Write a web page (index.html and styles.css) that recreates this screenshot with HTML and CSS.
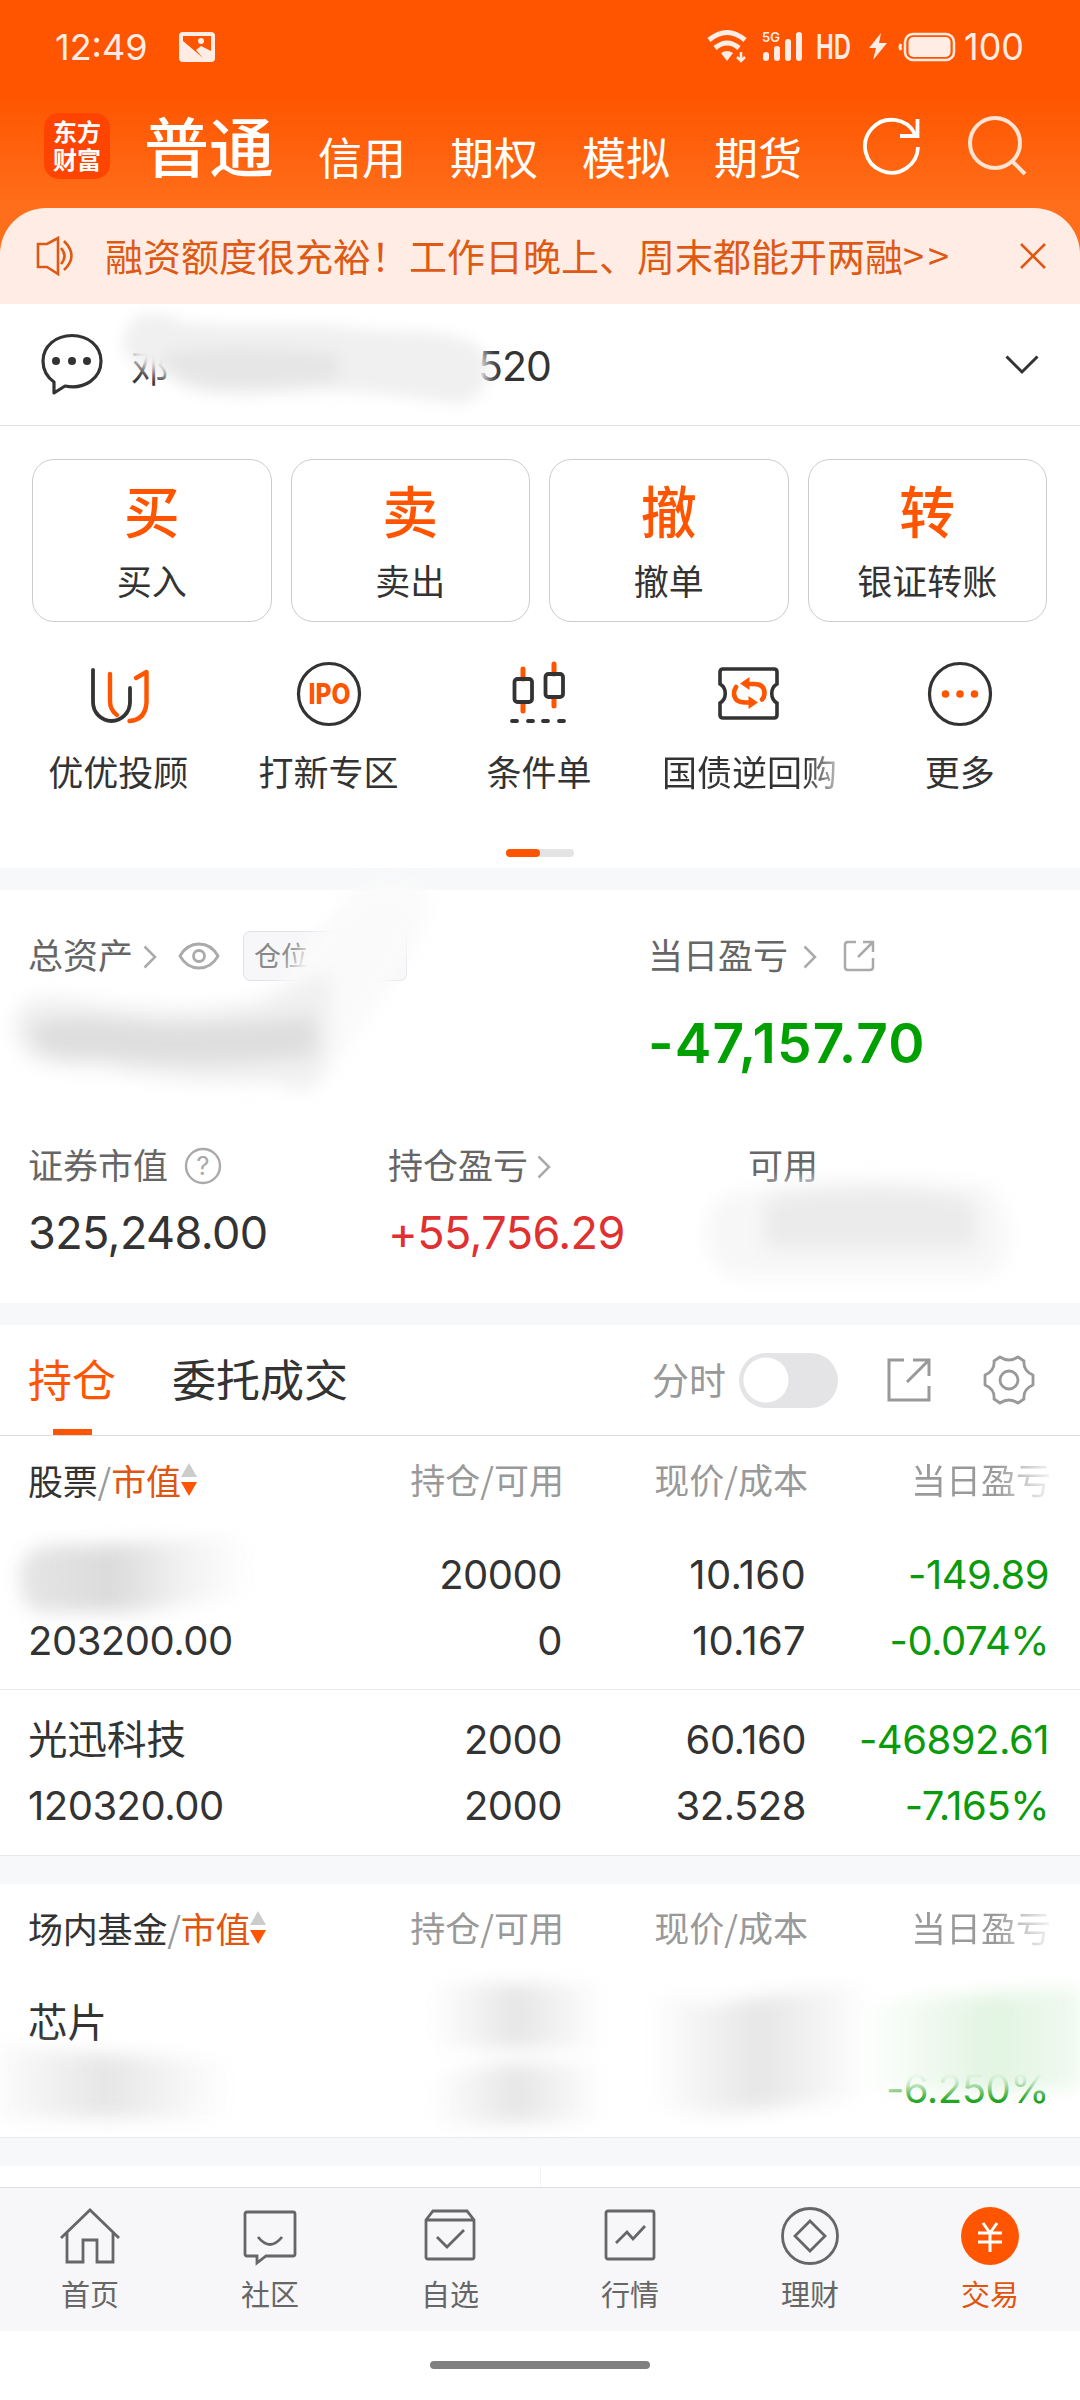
FILE: index.html
```html
<!DOCTYPE html>
<html lang="zh-CN">
<head>
  <meta charset="utf-8">
  <title>交易</title>
  <link rel="stylesheet" href="styles.css">
</head>
<body>
  <div class="header">
    <div class="status-bar">
      <span class="clock">12:49</span>
      <svg class="photo-icon" width="36" height="30" viewBox="0 0 36 30">
        <rect x="0" y="0" width="36" height="30" rx="4" fill="#ffede5"/>
        <path d="M4 4H32V19L22 14L17 18L24 26L4 9Z" fill="#ff5500"/>
        <circle cx="22" cy="9" r="3" fill="#ffede5"/>
      </svg>
      <div class="status-right">
        <svg width="330" height="60" viewBox="0 -11 330 60" fill="none" stroke="#ffede5">
          <path d="M3 12Q21 -3 39 12" stroke-width="5"/>
          <path d="M9 20Q21 10 33 20" stroke-width="5"/>
          <path d="M15 25Q21 21 27 25L21 33Z" fill="#ffede5" stroke="none"/>
          <path d="M35 24V31M31 29L35 33L39 29" stroke-width="2.5"/>
          <path d="M60 27V30M71 21V30M82 14V30M93 7V30" stroke-width="6" stroke-linecap="round"/>
          <path d="M175 5L163 20H170L167 32L181 15H173Z" fill="#ffede5" stroke="none"/>
          <rect x="199" y="6" width="49" height="26" rx="8" stroke-width="2.5"/>
          <rect x="202.500" y="9" width="42" height="20" rx="5" fill="#ffede5" stroke="none"/>
          <path d="M195 16Q193 19 195 22" stroke-width="3"/>
          <text class="net-text" x="56" y="14">5G</text>
          <text class="hd-text" x="110" y="31" textLength="35" lengthAdjust="spacingAndGlyphs">HD</text>
          <text class="battery-text" x="258" y="32" textLength="60" lengthAdjust="spacingAndGlyphs">100</text>
        </svg>
      </div>
    </div>
    <div class="top-nav">
      <div class="logo"><span>东方</span><span>财富</span></div>
      <span class="top-tab active">普通</span>
      <span class="top-tab">信用</span>
      <span class="top-tab">期权</span>
      <span class="top-tab">模拟</span>
      <span class="top-tab">期货</span>
      <svg class="refresh" width="60" height="60" viewBox="0 0 60 60" fill="none" stroke="#fff" stroke-width="3.800">
        <path d="M56 31A26.500 26.500 0 1 1 53 18"/>
        <path d="M55.500 3V20H38"/>
      </svg>
      <svg class="search" width="62" height="62" viewBox="0 0 62 62" fill="none" stroke="#ffe3d3" stroke-width="4">
        <circle cx="29" cy="29" r="25"/>
        <path d="M46 47L59 60"/>
      </svg>
    </div>
  </div>

  <div class="notice">
    <svg width="40" height="40" viewBox="0 0 40 40" fill="none" stroke="#de5a14" stroke-width="2.600">
      <path d="M2 8H11L22 2V38L11 31H2Z"/>
      <path d="M25 12Q32 20 25 28M28 5Q43 20 28 34"/>
    </svg>
    <span class="notice-text">融资额度很充裕！工作日晚上、周末都能开两融<span class="more">&gt;&gt;</span></span>
    <svg class="close" width="26" height="26" viewBox="0 0 26 26" fill="none" stroke="#de5a14" stroke-width="2.600">
      <path d="M1 1L25 25M25 1L1 25"/>
    </svg>
  </div>

  <div class="account">
    <svg width="62" height="64" viewBox="0 0 62 64" fill="none" stroke="#333" stroke-width="3.200">
      <path d="M13 49V60L24 53C44 57 60 45 60 28C60 13 47 2.500 31 2.500S2 13 2 28C2 37 6 44 13 49Z" stroke-linejoin="round"/>
      <g fill="#333" stroke="none"><circle cx="15" cy="28" r="4"/><circle cx="31" cy="28" r="4"/><circle cx="46" cy="28" r="4"/></g>
    </svg>
    <span class="account-name">邓</span>
    <span class="account-no">520</span>
    <svg class="chevron-down" width="34" height="20" viewBox="0 0 34 20" fill="none" stroke="#333" stroke-width="3">
      <path d="M1.500 1.500L17 17L32.500 1.500"/>
    </svg>
    <svg class="smudge account-smudge" width="420" height="120" viewBox="0 0 420 120">
      <path d="M16 40C14 8 36 -2 58 6C90 20 150 14 220 16C300 24 350 18 372 38C388 54 384 88 350 94C320 90 260 78 200 82C150 86 90 90 66 72C52 58 28 66 16 40Z" fill="#f1f0f0"/>
      <path d="M50 46C90 34 170 38 230 44V70C170 76 100 82 72 66Z" fill="#e6e6e6"/>
    </svg>
  </div>

  <div class="actions">
    <div class="action-card"><b>买</b><span>买入</span></div>
    <div class="action-card"><b>卖</b><span>卖出</span></div>
    <div class="action-card"><b>撤</b><span>撤单</span></div>
    <div class="action-card"><b>转</b><span>银证转账</span></div>
  </div>

  <div class="shortcuts">
    <div class="shortcut">
      <svg width="66" height="66" viewBox="0 0 66 66" fill="none" stroke-width="3.800" stroke-linecap="round" stroke-linejoin="round">
        <path d="M8 9V41A18 18.500 0 0 0 45 41V27" stroke="#333"/>
        <path d="M25 13V40Q25 49 32 54M51 17L61.500 11V42Q60 59 44.500 60" stroke="#ff5500" stroke-width="4.400"/>
      </svg>
      <span>优优投顾</span>
    </div>
    <div class="shortcut">
      <svg width="66" height="66" viewBox="0 0 66 66">
        <circle cx="33" cy="33" r="30.500" fill="none" stroke="#333" stroke-width="3.200"/>
        <text class="ipo-text" x="12.500" y="43" textLength="42" lengthAdjust="spacingAndGlyphs">IPO</text>
      </svg>
      <span>打新专区</span>
    </div>
    <div class="shortcut">
      <svg width="66" height="66" viewBox="0 0 66 66" fill="none" stroke-width="3.800" stroke-linecap="round">
        <path d="M17 8V18M17 43V50M48 3V13M48 38V45" stroke="#ff5500" stroke-width="5"/>
        <rect x="8.500" y="18" width="17.500" height="23" rx="3" stroke="#333"/>
        <rect x="39.500" y="13" width="17.500" height="23" rx="3" stroke="#333"/>
        <path d="M6 60H11M22 60H27M37 60H42M53 60H58" stroke="#333"/>
      </svg>
      <span>条件单</span>
    </div>
    <div class="shortcut">
      <svg width="66" height="66" viewBox="0 0 66 66" fill="none">
        <path d="M7 8H58Q61 8 61 11V23C54 27 54 38 61 42V54Q61 57 58 57H7Q4 57 4 54V42C11 38 11 27 4 23V11Q4 8 7 8Z" stroke="#333" stroke-width="3.600"/>
        <path d="M33 23H38Q48.500 23 48.500 32Q48.500 36 46 38.500M20 26Q18 29 18 33Q19 41.500 29 41.500H34" stroke="#ff5500" stroke-width="4.600" stroke-linecap="round"/>
        <path d="M24 22.500L33.500 16V29ZM42 41.500L32.500 35V48Z" fill="#ff5500"/>
      </svg>
      <span class="fade-tail">国债逆回购</span>
    </div>
    <div class="shortcut">
      <svg width="66" height="66" viewBox="0 0 66 66">
        <circle cx="33" cy="33" r="30.500" fill="none" stroke="#333" stroke-width="3.200"/>
        <g fill="#ff5500"><circle cx="18.500" cy="33" r="3.800"/><circle cx="33" cy="33" r="3.800"/><circle cx="47.500" cy="33" r="3.800"/></g>
      </svg>
      <span>更多</span>
    </div>
  </div>
  <div class="pager"><i></i></div>

  <div class="assets">
    <div class="asset-top">
      <div class="asset-main">
        <div class="label"><span>总资产</span>
          <svg class="arrow" width="14" height="24" viewBox="0 0 14 24"><path d="M1.500 1.500L12 12L1.500 22.500"/></svg>
          <svg class="eye" width="42" height="28" viewBox="0 0 42 28" fill="none" stroke="#aaa" stroke-width="2.800">
            <path d="M2 14C11 -2 31 -2 40 14C31 30 11 30 2 14Z"/><circle cx="21" cy="14" r="5.500"/>
          </svg>
          <span class="tag">仓位</span>
        </div>
      </div>
      <div class="asset-day">
        <div class="label"><span>当日盈亏</span>
          <svg class="arrow" width="14" height="24" viewBox="0 0 14 24"><path d="M1.500 1.500L12 12L1.500 22.500"/></svg>
          <svg class="share-small" width="32" height="32" viewBox="0 0 32 32" fill="none" stroke="#aaa" stroke-width="2.500">
            <path d="M13 2H5Q2 2 2 5V27Q2 30 5 30H27Q30 30 30 27V18M20 2H30V12M30 2L15 17"/>
          </svg>
        </div>
        <div class="day-value num">-47,157.70</div>
      </div>
    </div>
    <div class="asset-grid">
      <div>
        <div class="label"><span>证券市值</span>
          <svg class="help" width="38" height="38" viewBox="0 0 38 38">
            <circle cx="19" cy="19" r="17" fill="none" stroke="#aaa" stroke-width="2.400"/>
            <text class="help-text" x="19" y="28" text-anchor="middle">?</text>
          </svg>
        </div>
        <div class="value num">325,248.00</div>
      </div>
      <div>
        <div class="label"><span>持仓盈亏</span>
          <svg class="arrow close-arrow" width="14" height="24" viewBox="0 0 14 24"><path d="M1.500 1.500L12 12L1.500 22.500"/></svg>
        </div>
        <div class="value num red">+55,756.29</div>
      </div>
      <div>
        <div class="label"><span>可用</span></div>
      </div>
    </div>
    <svg class="smudge asset-smudge" width="1080" height="430" viewBox="0 0 1080 430">
      <path d="M360 4C390 -14 432 -4 428 25C420 60 400 90 375 125L330 190C325 210 300 215 285 200L270 110C290 100 300 60 320 46Z" fill="#fafafa"/>
      <path d="M14 150C12 112 40 114 80 118C150 128 200 130 250 120C290 110 310 98 330 90V165C322 200 305 218 280 200C230 202 160 200 110 188C50 186 20 184 14 150Z" fill="#f0f0f0"/>
      <path d="M30 145C60 132 100 136 150 142C200 144 260 140 315 134V172C280 180 160 186 100 174C50 178 34 170 30 145Z" fill="#dedede"/>
      <path d="M715 320C770 294 900 290 990 305C1010 330 1020 370 990 395H730C705 380 700 350 715 320Z" fill="#f7f7f7"/>
      <path d="M765 318C820 304 920 302 975 320V366H765Z" fill="#ebebeb"/>
    </svg>
  </div>

  <div class="tabs">
    <span class="tab active">持仓</span>
    <span class="tab">委托成交</span>
    <span class="minute">分时</span>
    <span class="toggle"></span>
    <svg class="share" width="44" height="44" viewBox="0 0 44 44" fill="none" stroke="#999" stroke-width="3">
      <path d="M17 2H2V42H42V28M26 2H42V18M42 2L20 24"/>
    </svg>
    <svg class="gear" width="52" height="52" viewBox="0 0 52 52" fill="none" stroke="#999" stroke-width="2.800" stroke-linejoin="round">
      <path d="M17 3Q26 9 35 3L41 7Q40 17 50 21V31Q40 35 41 45L35 49Q26 43 17 49L11 45Q12 35 2 31V21Q12 17 11 7Z"/>
      <circle cx="26" cy="26" r="9"/>
    </svg>
  </div>

  <div class="table">
    <div class="thead">
      <span class="name"><em>股票</em>/<strong>市值</strong><svg width="16" height="34" viewBox="0 0 16 34"><path d="M8 0L16 14H0Z" fill="#ccc"/><path d="M0 19H16L8 33Z" fill="#ff5500"/></svg></span>
      <span>持仓/可用</span>
      <span>现价/成本</span>
      <span class="fade">当日盈亏</span>
    </div>
    <div class="trow num">
      <span><br>203200.00</span>
      <span>20000<br>0</span>
      <span class="wide">10.160<br>10.167</span>
      <span class="green">-149.89<br>-0.074%</span>
      <svg class="smudge row-smudge" width="300" height="120" viewBox="0 0 300 120">
        <path d="M20 50C18 26 36 18 70 19C110 20 160 14 250 10V68C200 74 160 86 120 86H45C26 86 20 74 20 50Z" fill="url(#fadeRight)"/>
        <defs><linearGradient id="fadeRight"><stop offset="0" stop-color="#e6e6e6"/><stop offset=".4" stop-color="#dbdbdb"/><stop offset=".7" stop-color="#f1f1f1"/><stop offset="1" stop-color="#fff"/></linearGradient></defs>
      </svg>
    </div>
    <div class="trow num second">
      <span><em class="stock">光迅科技</em><br>120320.00</span>
      <span>2000<br>2000</span>
      <span>60.160<br>32.528</span>
      <span class="green">-46892.61<br>-7.165%</span>
    </div>
  </div>
  <div class="gap"></div>

  <div class="table">
    <div class="thead">
      <span class="name"><em>场内基金</em>/<strong>市值</strong><svg width="16" height="34" viewBox="0 0 16 34"><path d="M8 0L16 14H0Z" fill="#ccc"/><path d="M0 19H16L8 33Z" fill="#ff5500"/></svg></span>
      <span>持仓/可用</span>
      <span>现价/成本</span>
      <span class="fade">当日盈亏</span>
    </div>
    <div class="trow num">
      <span><em class="stock">芯片</em></span>
      <span></span>
      <span></span>
      <span class="green"><br>-6.250%</span>
      <svg class="smudge fund-smudge" width="1080" height="160" viewBox="0 0 1080 160">
        <defs>
          <linearGradient id="fadeBoth"><stop offset="0" stop-color="#fff"/><stop offset=".5" stop-color="#e6e6e6"/><stop offset="1" stop-color="#fff"/></linearGradient>
          <linearGradient id="fadeGreen"><stop offset="0" stop-color="#fff"/><stop offset=".55" stop-color="#e2f4e2"/><stop offset="1" stop-color="#f3fbf3"/></linearGradient>
        </defs>
        <path d="M-20 68L40 76L230 86V144L-20 144Z" fill="url(#fadeBoth)"/>
        <rect x="430" y="10" width="175" height="64" fill="url(#fadeBoth)"/>
        <path d="M430 102L500 90H605V146L430 152Z" fill="url(#fadeBoth)"/>
        <path d="M650 18L710 30L870 8V124L710 140L650 134Z" fill="url(#fadeBoth)"/>
        <path d="M860 28L1100 12V114L1040 116L890 118L860 130Z" fill="url(#fadeGreen)"/>
      </svg>
    </div>
  </div>
  <div class="gap"></div>
  <div class="peek"><i></i></div>

  <div class="bottom-nav">
    <div class="nav-item">
      <svg width="60" height="60" viewBox="0 0 60 60">
        <path d="M1 32L30 4L59 32M7 27V56H23V34H37V56H53V27"/>
      </svg>
      <span>首页</span>
    </div>
    <div class="nav-item">
      <svg width="60" height="60" viewBox="0 0 60 60">
        <path d="M7 6H53Q55 6 55 8V48Q55 50 53 50H26L17 57V50H7Q5 50 5 48V8Q5 6 7 6ZM18 31Q30 46 42 31"/>
      </svg>
      <span>社区</span>
    </div>
    <div class="nav-item">
      <svg width="60" height="60" viewBox="0 0 60 60">
        <path d="M13 5H47L54 14V51Q54 53 52 53H8Q6 53 6 51V14ZM6 14H54M17 31L27 41L44 24"/>
      </svg>
      <span>自选</span>
    </div>
    <div class="nav-item">
      <svg width="60" height="60" viewBox="0 0 60 60">
        <rect x="6" y="5" width="48" height="48" rx="2"/>
        <path d="M16 37L27 26L33 33L45 20"/>
      </svg>
      <span>行情</span>
    </div>
    <div class="nav-item">
      <svg width="60" height="60" viewBox="0 0 60 60">
        <circle cx="30" cy="30" r="27.500"/>
        <path d="M30 15L45 30L30 45L15 30Z"/>
      </svg>
      <span>理财</span>
    </div>
    <div class="nav-item active">
      <svg width="60" height="60" viewBox="0 0 60 60">
        <circle class="disc" cx="30" cy="30" r="29"/>
        <path class="yen" d="M23 17L30 27L37 17M18 27H42M18 36H42M30 27V46"/>
      </svg>
      <span>交易</span>
    </div>
  </div>
  <div class="home-bar"><i></i></div>
</body>
</html>
```
FILE: styles.css
```css
* {
  box-sizing: border-box;
}

body {
  width: 1080px;
  height: 2400px;
  margin: 0;
  overflow: hidden;
  background: #fff;
  color: #333;
  font-family: "Noto Sans CJK SC", sans-serif;
  font-size: 35px;
}

svg {
  display: block;
  flex-shrink: 0;
}

em, i {
  font-style: normal;
}

.num {
  font-family: Inter, "Noto Sans CJK SC", sans-serif;
}

.smudge {
  position: absolute;
  left: 0;
  filter: blur(9px);
}

/* header */
.header {
  height: 254px;
  margin-bottom: -46px;
  background: linear-gradient(#ff5500 95px, #ff6f1b 208px);
  color: #fff;
}

.status-bar {
  display: flex;
  align-items: center;
  height: 92px;
  padding: 1px 44px 0 55px;
  color: #ffede5;
}

.clock {
  width: 124px;
  font-family: Inter, sans-serif;
  font-size: 36px;
}

.status-right {
  margin-left: auto;
}

.status-right text, .ipo-text, .help-text {
  font-family: Inter, sans-serif;
  stroke: none;
  fill: #ffede5;
}

.net-text { font-size: 13px; font-weight: 600; }
.hd-text { font-size: 34px; font-weight: 600; }
.battery-text { font-size: 37px; }

.top-nav {
  display: flex;
  height: 116px;
  padding-left: 44px;
}

.logo {
  display: flex;
  flex-direction: column;
  align-items: center;
  width: 66px;
  height: 66px;
  margin: 21px 35px 0 0;
  padding-top: 4px;
  border-radius: 15px;
  background: #ff4400;
  font-size: 24px;
  font-weight: 700;
  line-height: 28px;
}

.top-tab {
  margin: 31px 0 0 44px;
  font-size: 44px;
  line-height: 66px;
}

.top-tab.active {
  margin: 5px 0 0 -1px;
  font-size: 65px;
  line-height: 94px;
  font-weight: 500;
}

.refresh {
  margin: 24px 0 0 60px;
}

.search {
  margin: 22px 0 0 44px;
}

/* notice */
.notice {
  display: flex;
  align-items: center;
  height: 96px;
  padding: 0 34px 0 36px;
  border-radius: 46px 46px 0 0;
  background: #ffede5;
  color: #de5a14;
}

.notice-text {
  margin: -4px 0 0 29px;
  font-size: 38px;
  white-space: nowrap;
}

.notice-text .more {
  letter-spacing: 4px;
}

.close {
  margin-left: auto;
}

/* account */
.account {
  position: relative;
  display: flex;
  align-items: center;
  height: 122px;
  padding: 0 41px;
  border-bottom: 1px solid #e2e2e2;
}

.account-name {
  margin: 2px 0 0 28px;
  font-size: 38px;
}

.account-no {
  margin: 3px 0 0 309px;
  font-family: Inter, sans-serif;
  font-size: 41px;
  letter-spacing: -1px;
}

.chevron-down {
  margin-left: auto;
}

.account-smudge {
  left: 108px;
  top: 6px;
  filter: blur(7px);
}

/* trade buttons */
.actions {
  display: flex;
  gap: 19px;
  padding: 33px 33px 0 32px;
}

.action-card {
  display: flex;
  flex: 1;
  flex-direction: column;
  align-items: center;
  height: 163px;
  border: 1px solid #ccc;
  border-radius: 22px;
}

.action-card b {
  margin-top: 12px;
  color: #ff5500;
  font-size: 56px;
  font-weight: 500;
  line-height: 74px;
}

.action-card span {
  margin-top: 3px;
  line-height: 62px;
}

.shortcuts {
  display: grid;
  grid-template-columns: repeat(5, 1fr);
  padding: 39px 15px 0 13px;
}

.shortcut {
  display: flex;
  flex-direction: column;
  align-items: center;
}

.shortcut span {
  margin-top: 19px;
  line-height: 50px;
}

.fade-tail {
  background: linear-gradient(90deg, #333 82%, #bbb);
  background-clip: text;
  color: transparent;
}

.ipo-text {
  fill: #ff5500;
  font-size: 28px;
  font-weight: 800;
}

.pager {
  width: 68px;
  height: 8px;
  margin: 53px 0 11px 506px;
  border-radius: 4px;
  background: #e4e4e4;
}

.pager i {
  display: block;
  width: 34px;
  height: 8px;
  border-radius: 4px;
  background: #ff5500;
}

/* assets */
.assets {
  position: relative;
  height: 457px;
  border-top: 22px solid #f7f8fa;
  border-bottom: 22px solid #f7f8fa;
}

.asset-top {
  display: grid;
  grid-template-columns: 620px 1fr;
  height: 250px;
  padding: 40px 0 0 28px;
}

.label {
  display: flex;
  align-items: center;
  height: 50px;
  padding-top: 1px;
  color: #666;
}

.label > span:first-child {
  margin-top: -4px;
}

.arrow {
  margin: 2px 0 0 10px;
  fill: none;
  stroke: #aaa;
  stroke-width: 2.5;
}

.asset-day .arrow {
  margin-left: 15px;
}

.arrow.close-arrow {
  margin-left: 9px;
}

.eye {
  margin-left: 21px;
}

.tag {
  width: 164px;
  height: 50px;
  margin-left: 23px;
  padding-left: 10px;
  border: 1px solid #e2e2e6;
  border-radius: 7px;
  background: #f7f7fa;
  color: #888;
  font-size: 27px;
  line-height: 46px;
}

.share-small {
  margin-left: 26px;
}

.day-value {
  margin-top: 31px;
  color: #00a000;
  font-size: 55px;
  font-weight: 600;
  line-height: 64px;
  letter-spacing: 1.2px;
}

.asset-grid {
  display: grid;
  grid-template-columns: 360px 360px 1fr;
  padding-left: 28px;
}

.help {
  margin-left: 16px;
}

.help-text {
  fill: #aaa;
  font-size: 26px;
}

.value {
  margin-top: 18px;
  font-size: 45px;
  line-height: 50px;
  letter-spacing: -.6px;
}

.red { color: #e03030; }
.green { color: #0a9a0a; }

.asset-smudge {
  top: -8px;
}

/* holding tabs */
.tabs {
  display: flex;
  align-items: center;
  height: 111px;
  padding-left: 28px;
  border-bottom: 1px solid #ddd;
}

.tab {
  height: 110px;
  margin-right: 56px;
  font-size: 44px;
  line-height: 106px;
}

.tab.active {
  background: linear-gradient(#ff5500, #ff5500) center bottom / 39px 6px no-repeat;
  color: #ff5500;
}

.minute {
  margin: -2px 0 0 248px;
  color: #999;
  font-size: 37px;
}

.toggle {
  width: 99px;
  height: 55px;
  margin-left: 13px;
  border-radius: 28px;
  background: radial-gradient(circle at 27px 27px, #fff 22px, #e4e4e7 23px);
}

.share {
  margin-left: 49px;
}

.gear {
  margin-left: 52px;
}

/* tables */
.thead, .trow {
  position: relative;
  display: grid;
  grid-template-columns: 284px 250px 244px 243px;
  padding: 0 31px 0 28px;
  text-align: right;
}

.thead {
  grid-template-columns: 286px 250px 244px 243px;
  padding-right: 29px;
  color: #999;
  line-height: 86px;
  height: 90px;
  white-space: nowrap;
}

.thead .name {
  display: flex;
  height: 88px;
  align-items: center;
  letter-spacing: -.2px;
}

.thead em {
  color: #333;
}

.thead strong {
  color: #e05510;
  font-weight: 400;
}

.thead .fade {
  justify-self: end;
  background: linear-gradient(90deg, #999 60%, #f4f4f4);
  background-clip: text;
  color: transparent;
}

.trow {
  height: 164px;
  padding-top: 16px;
  border-bottom: 1px solid #e8eaec;
  font-size: 40px;
  line-height: 66px;
  letter-spacing: -.5px;
}

.trow > span:first-child {
  text-align: left;
  white-space: nowrap;
}

.trow .wide {
  letter-spacing: .3px;
}

.trow.second {
  height: 166px;
  padding-top: 17px;
}

.stock {
  font-size: 39.5px;
  letter-spacing: 0;
}

.row-smudge {
  top: 0;
}

.fund-smudge {
  top: 0;
}

.gap {
  height: 28px;
  background: #f6f8fa;
}

.peek {
  display: flex;
  justify-content: center;
  height: 21px;
}

.peek i {
  width: 1px;
  background: #f3f3f3;
}

/* bottom bar */
.bottom-nav {
  display: grid;
  grid-template-columns: repeat(6, 1fr);
  height: 144px;
  border-top: 1px solid #ddd;
  background: #f7f7fa;
  color: #666;
  font-size: 29px;
}

.nav-item {
  display: flex;
  flex-direction: column;
  align-items: center;
  padding-top: 18px;
}

.nav-item svg {
  fill: none;
  stroke: #666;
  stroke-width: 2.8;
}

.nav-item span {
  margin-top: 4px;
  line-height: 46px;
}

.nav-item.active {
  color: #e05510;
}

.nav-item .disc {
  fill: #ff5500;
  stroke: none;
}

.nav-item .yen {
  stroke: #fff;
  stroke-width: 3;
}

.home-bar {
  display: flex;
  justify-content: center;
  padding-top: 30px;
}

.home-bar i {
  width: 220px;
  height: 8px;
  border-radius: 4px;
  background: #808080;
}
```
